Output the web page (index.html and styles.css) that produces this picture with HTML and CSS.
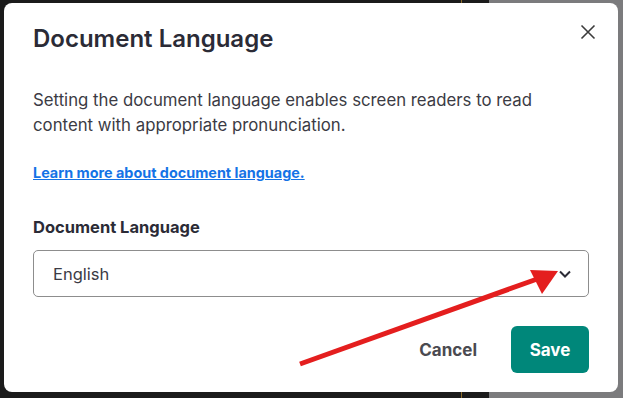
FILE: index.html
```html
<!DOCTYPE html>
<html lang="en">
	<head>
		<meta charset="UTF-8" />
		<title>Document Language</title>
		<link rel="stylesheet" href="styles.css">
	</head>
	<body>
		<div class="backdrop">
			<div class="backdrop-dark"></div>
			<div class="backdrop-line"></div>
			<div class="backdrop-gap"></div>
			<div class="backdrop-gray"></div>
		</div>

		<div class="modal">
			<div class="modal-header">
				<h2>Document Language</h2>
				<button class="close-button" aria-label="Close">
					<svg width="16" height="16" viewBox="0 0 16 16">
						<path d="M1.5 1.5 L14.5 14.5 M14.5 1.5 L1.5 14.5" stroke="#3c3c3c" stroke-width="1.6" fill="none" />
					</svg>
				</button>
			</div>

			<p class="description">
				Setting the document language enables screen readers to read
				content with appropriate pronunciation.
			</p>

			<a class="learn-link" href="#">Learn more about document language.</a>

			<label class="field-label" for="doc-lang">Document Language</label>
			<div class="select-box" id="doc-lang">
				<span>English</span>
				<svg width="14" height="10" viewBox="0 0 14 10">
					<path d="M2 2.5 L7 7.5 L12 2.5" stroke="#2b2b36" stroke-width="2" fill="none" />
				</svg>
			</div>

			<div class="modal-footer">
				<button class="cancel-button">Cancel</button>
				<button class="save-button">Save</button>
			</div>
		</div>

		<svg class="annotation" width="623" height="398" viewBox="0 0 623 398">
			<line x1="300" y1="364" x2="540" y2="278" stroke="#e41e1e" stroke-width="5" />
			<polygon points="558,271 530,270 542,294" fill="#e41e1e" />
		</svg>
	</body>
</html>
```

FILE: styles.css
```css
body {
	margin: 0;
	padding: 0;
	width: 623px;
	height: 398px;
	overflow: hidden;
	position: relative;
	font-family: 'Inter', 'Liberation Sans', sans-serif;
	background: #1b1b1b;
}

.backdrop {
	display: flex;
	height: 100%;
}

.backdrop-dark {
	width: 461px;
	background: #1b1b1b;
}

.backdrop-line {
	width: 1px;
	background: #8a6a2a;
}

.backdrop-gap {
	width: 27px;
	background: #1b1b1b;
}

.backdrop-gray {
	flex: 1;
	background: #7b7b7d;
}

.modal {
	position: absolute;
	left: 4px;
	top: 3px;
	width: 614px;
	height: 389px;
	box-sizing: border-box;
	padding: 20px 29px 19px 29px;
	background: #fff;
	border-radius: 8px;
	display: flex;
	flex-direction: column;
}

.modal-header {
	display: flex;
	justify-content: space-between;
	align-items: flex-start;
}

.modal-header h2 {
	margin: 0;
	font-size: 24px;
	line-height: 32px;
	font-weight: 600;
	color: #2b2b36;
}

.close-button {
	background: none;
	border: none;
	padding: 0;
	margin: 1px -7px 0 0;
	cursor: pointer;
	display: flex;
}

.description {
	margin: 33px 0 0 0;
	max-width: 525px;
	font-size: 16.8px;
	line-height: 25px;
	color: #3b3b44;
}

.learn-link {
	margin-top: 25px;
	align-self: flex-start;
	font-size: 14.4px;
	line-height: 20px;
	font-weight: 700;
	color: #1473e6;
	text-decoration: underline;
}

.field-label {
	margin-top: 32px;
	font-size: 16.5px;
	line-height: 24px;
	font-weight: 700;
	color: #2b2b36;
}

.select-box {
	margin-top: 11px;
	height: 47px;
	box-sizing: border-box;
	border: 1px solid #8d8d8d;
	border-radius: 5px;
	display: flex;
	align-items: center;
	justify-content: space-between;
	padding: 0 16px 0 19px;
	font-size: 16.5px;
	color: #3b3b44;
}

.modal-footer {
	margin-top: auto;
	display: flex;
	justify-content: flex-end;
	align-items: center;
	gap: 34px;
}

.cancel-button {
	background: none;
	border: none;
	padding: 0;
	font-family: inherit;
	font-size: 17px;
	font-weight: 700;
	color: #4a4a50;
	cursor: pointer;
}

.save-button {
	width: 78px;
	height: 47px;
	border: none;
	border-radius: 6px;
	background: #00877a;
	color: #fff;
	font-family: inherit;
	font-size: 17px;
	font-weight: 700;
	cursor: pointer;
}

.annotation {
	position: absolute;
	left: 0;
	top: 0;
	pointer-events: none;
}
```
